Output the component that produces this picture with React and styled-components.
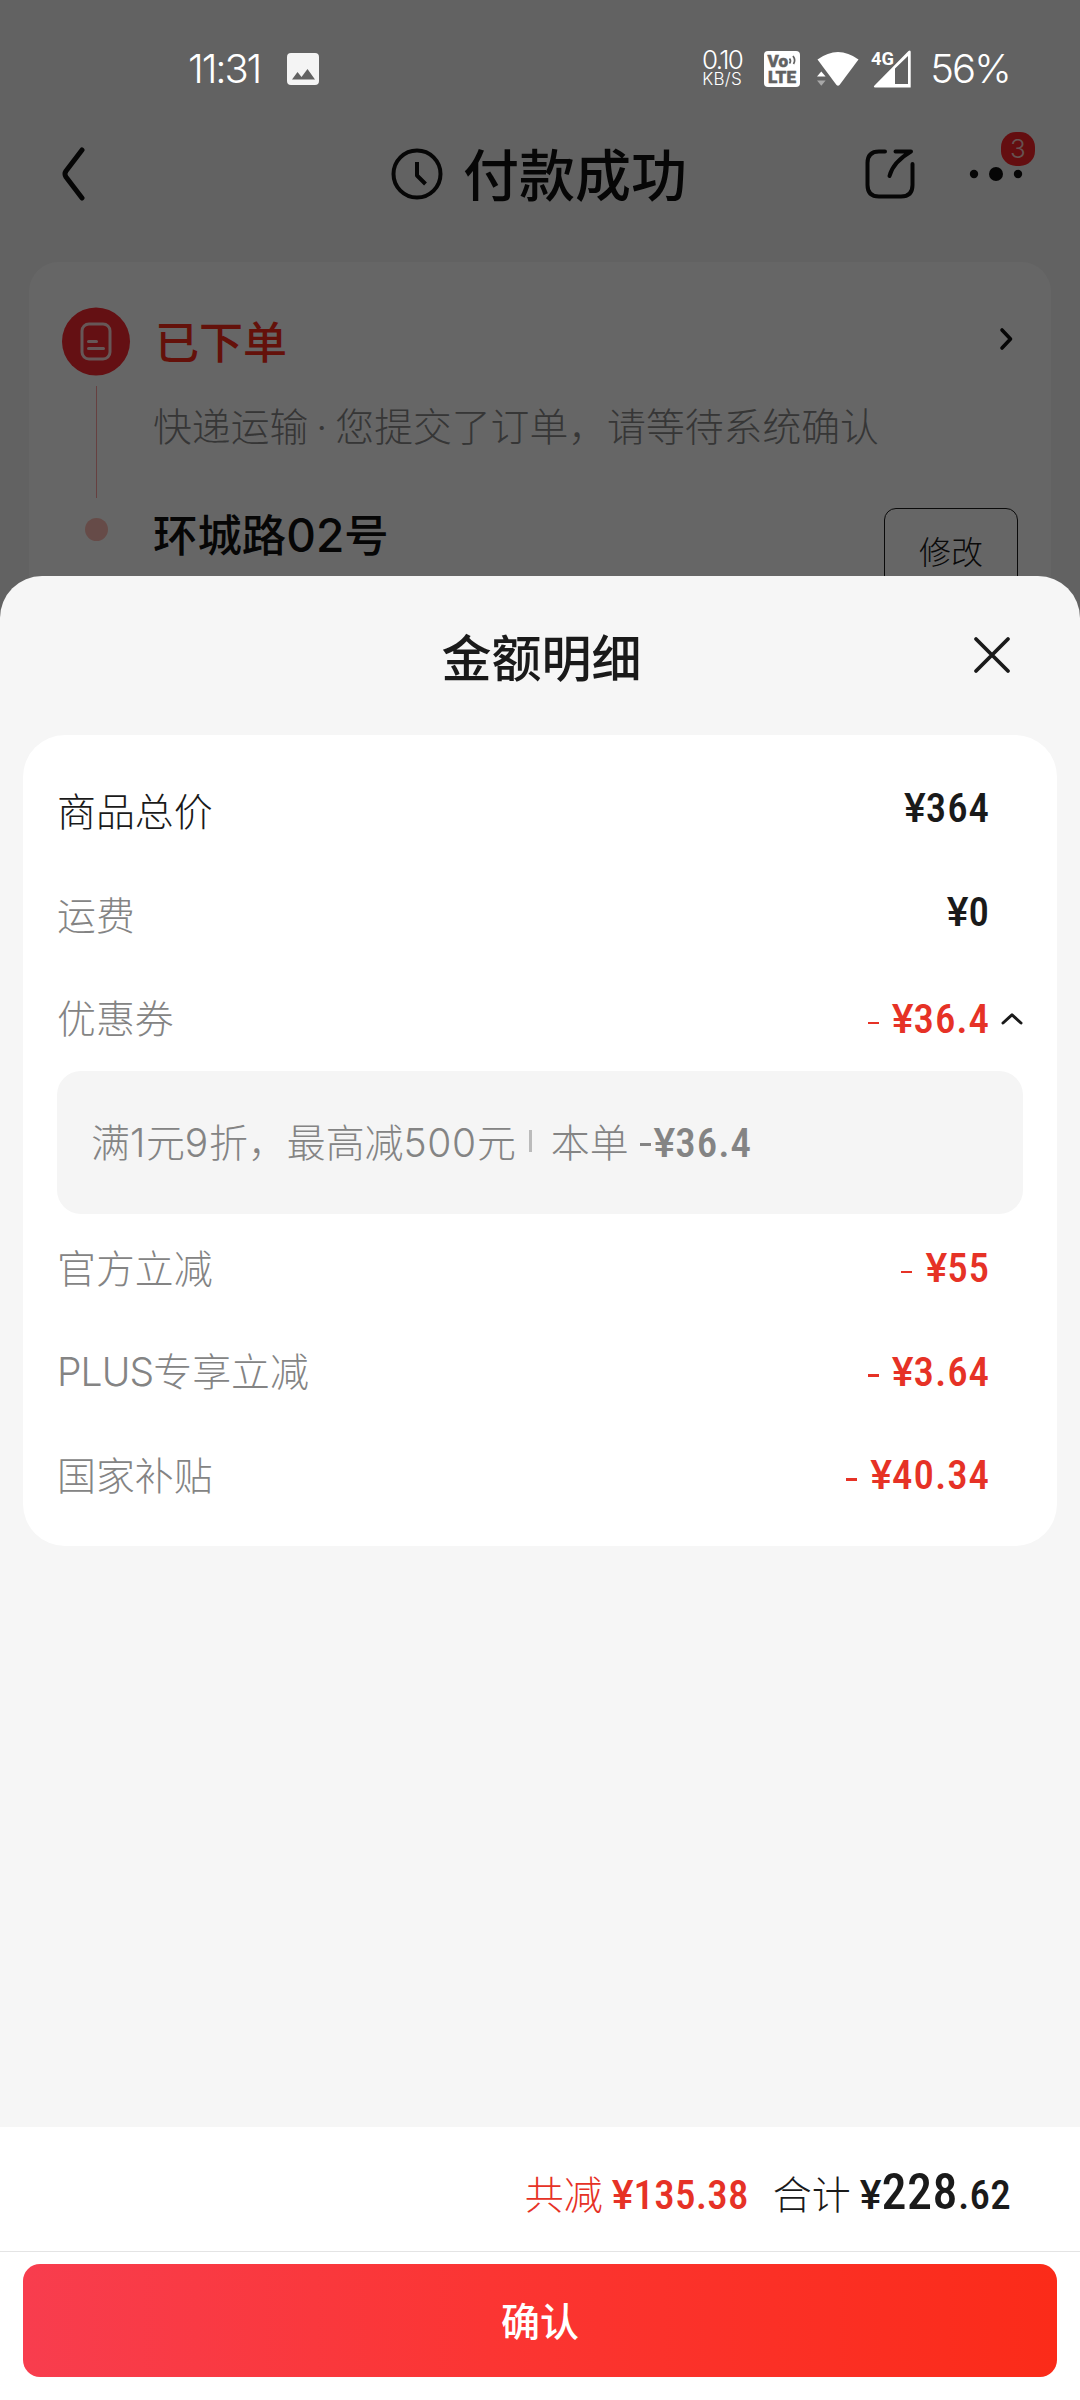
import React from "react";
import styled, { createGlobalStyle } from "styled-components";

const CJK = `"Noto Sans CJK SC", sans-serif`;
const LATIN = `Inter, "Noto Sans CJK SC", sans-serif`;
const NUM = `Roboto, "Noto Sans CJK SC", sans-serif`;

const Global = createGlobalStyle`
  *, *::before, *::after { box-sizing: border-box; }
  body { margin: 0; font-family: ${CJK}; color: #1a1a1a; }
`;

const Screen = styled.div`
  position: relative;
  width: 1080px;
  height: 2400px;
  overflow: hidden;
  background: #f6f6f6;
  display: flex;
  flex-direction: column;
`;

const StatusBar = styled.div`
  position: relative;
  z-index: 2;
  height: 118px;
  padding: 20px 70px 0 188px;
  display: flex;
  align-items: center;
  color: #fff;
  font-family: ${LATIN};
  font-weight: 300;
  svg { display: block; flex: none; overflow: visible; }
`;

const BigStatus = styled.span`
  font-size: 40px;
  line-height: 48px;
  letter-spacing: ${(p) => p.$track || "0"};
`;

const PhotoSlot = styled.span`
  margin-left: 27px;
`;

const Speed = styled.div`
  margin-left: auto;
  width: 42px;
  display: flex;
  flex-direction: column;
  align-items: center;
  font-size: 26px;
  line-height: 20px;
  letter-spacing: -1.6px;
  white-space: nowrap;
  small { margin-top: 1px; font-size: 17px; line-height: 17px; letter-spacing: 0.3px; font-weight: 300; }
`;

const StatusIcons = styled.div`
  display: flex;
  align-items: center;
  margin: 0 19px 0 21px;
`;

const IconSlot = styled.span`
  margin-left: ${(p) => p.$gap}px;
`;

const Page = styled.div`
  flex: 1;
  display: flex;
  flex-direction: column;
`;

const NavBar = styled.div`
  height: 144px;
  padding: 0 45px 32px 62px;
  display: grid;
  grid-template-columns: 150px 1fr 170px;
  align-items: center;
  svg { display: block; }
`;

const NavTitle = styled.div`
  display: flex;
  align-items: center;
  justify-content: center;
  gap: 20px;
  padding-left: 1px;
  font-size: 56px;
  font-weight: 500;
  color: #111;
  span { line-height: 60px; padding-bottom: 5px; }
`;

const NavActions = styled.div`
  display: flex;
  align-items: center;
  justify-content: space-between;
`;

const MoreWrap = styled.div`
  position: relative;
  width: 66px;
  height: 50px;
  display: flex;
  align-items: center;
`;

const Badge = styled.span`
  position: absolute;
  left: 32px;
  top: -17px;
  width: 34px;
  height: 34px;
  border-radius: 15px;
  background: #fa2428;
  color: #ffd0cc;
  display: flex;
  align-items: center;
  justify-content: center;
  font: 300 26px/36px ${LATIN};
`;

const OrderCard = styled.div`
  margin: 0 29px;
  height: 600px;
  border-radius: 30px;
  background: #fff;
  padding: 45px 33px 0;
  display: grid;
  grid-template-columns: 69px 1fr auto;
  column-gap: 22px;
  align-items: start;
`;

const Track = styled.div`
  display: flex;
  flex-direction: column;
  align-items: center;
  svg { display: block; }
`;

const TrackLine = styled.div`
  width: 1px;
  height: 112px;
  margin: 10px 1px 20px 0;
  background: #ffa0a0;
`;

const TrackDot = styled.div`
  width: 23px;
  height: 23px;
  margin-right: 1px;
  border-radius: 50%;
  background: #ffbcb3;
`;

const OrderText = styled.div`
  display: flex;
  flex-direction: column;
  white-space: nowrap;
  width: 700px;
`;

const OrderStatus = styled.div`
  margin-top: 1px;
  padding-left: 2px;
  font-size: 44px;
  line-height: 64px;
  font-weight: 500;
  color: #fa2c19;
`;

const OrderNote = styled.div`
  margin-top: 22px;
  font-size: 38.85px;
  line-height: 60px;
  font-weight: 300;
  color: #888;
  span { font-family: Inter; margin: 0 8px; }
`;

const OrderAddress = styled.div`
  margin-top: 44px;
  font-size: 44.4px;
  line-height: 64px;
  font-weight: 500;
  color: #111;
  span { font-family: Inter; font-size: 46px; font-weight: 450; }
`;

const OrderSide = styled.div`
  display: flex;
  flex-direction: column;
  align-items: flex-end;
  svg { display: block; margin: 20px 5px 0 0; }
`;

const EditButton = styled.div`
  margin-top: 157px;
  width: 134px;
  height: 88px;
  border: 1.5px solid #1a1a1a;
  border-radius: 12px;
  text-align: center;
  font-size: 32px;
  line-height: 83px;
  font-weight: 300;
`;

const Scrim = styled.div`
  position: absolute;
  inset: 0;
  z-index: 1;
  background: rgba(0, 0, 0, 0.6);
`;

const Sheet = styled.section`
  position: absolute;
  z-index: 3;
  left: 0;
  right: 0;
  top: 576px;
  bottom: 0;
  border-radius: 42px 42px 0 0;
  background: #f6f6f6;
  overflow: hidden;
  display: flex;
  flex-direction: column;
`;

const SheetHead = styled.header`
  height: 159px;
  padding: 0 68px 2px;
  display: grid;
  grid-template-columns: 40px 1fr 40px;
  align-items: center;
  justify-items: center;
  svg { display: block; }
`;

const SheetTitle = styled.h1`
  margin: 0;
  padding: 0 0 0 3px;
  font-size: 50px;
  line-height: 60px;
  font-weight: 500;
`;

const Detail = styled.div`
  margin: 0 23px;
  height: 811px;
  padding: 25px 34px 0;
  border-radius: 42px;
  background: #fff;
`;

const Row = styled.div`
  height: 103.6px;
  display: flex;
  align-items: center;
  justify-content: space-between;
`;

const Label = styled.span`
  padding-bottom: 5px;
  font-size: 38.9px;
  line-height: 60px;
  font-weight: 300;
  color: ${(p) => (p.$strong ? "#1a1a1a" : "#848484")};
  span { font: 300 39px Inter; letter-spacing: ${(p) => p.$track || "-0.9px"}; }
`;

const Amount = styled.span`
  display: flex;
  align-items: center;
  gap: 13px;
  padding-bottom: ${(p) => (p.$off ? 0 : 7)}px;
  color: ${(p) => (p.$off ? "#e63226" : "#1a1a1a")};
  svg { display: block; }
`;

const AmountSlot = styled.span`
  width: 33px;
  display: flex;
  justify-content: flex-end;
  margin-left: -13px;
`;

const Minus = styled.span`
  width: 11px;
  height: 2.5px;
  margin: ${(p) => p.$margin || "8px 0 0"};
  background: currentColor;
`;

const Figure = styled.span`
  font-family: ${NUM};
  font-size: ${(p) => p.$size || 41}px;
  line-height: 50px;
  font-weight: 550;
  font-stretch: 87%;
  letter-spacing: ${(p) => p.$track || "0.9px"};
`;

const Yen = styled.span`
  font-stretch: 100%;
  letter-spacing: 0;
`;

const Price = ({ children, $size, $track }) => (
  <Figure $track={$track}>
    <Yen>¥</Yen>
    {children}
  </Figure>
);

const Coupon = styled.div`
  height: 143.5px;
  margin-bottom: 2px;
  padding: 0 34px;
  border-radius: 24px;
  background: #f5f5f5;
  display: flex;
  align-items: center;
  color: #848484;
  white-space: nowrap;
`;

const Bar = styled.span`
  width: 3px;
  height: 22px;
  margin: 0 19px 4px 13px;
  background: #bbb;
`;

const Spacer = styled.div`
  flex: 1;
`;

const Summary = styled.div`
  height: 124px;
  padding: 0 69px 0 0;
  background: #fff;
  display: flex;
  align-items: baseline;
  justify-content: flex-end;
  font-size: 39px;
  line-height: 130px;
  font-weight: 300;
`;

const SumGroup = styled.div`
  display: flex;
  align-items: baseline;
  gap: 9px;
  margin-left: 24px;
  color: ${(p) => (p.$off ? "#e63226" : "#1a1a1a")};
`;

const Footer = styled.footer`
  height: 149px;
  padding: 11.5px 23px 0;
  border-top: 1px solid #e4e4e4;
  background: #fff;
`;

const Confirm = styled.button`
  display: block;
  width: 100%;
  height: 113px;
  padding: 0 0 3px;
  border: 0;
  border-radius: 17px;
  background: linear-gradient(90deg, #f83d4e, #fb3533 45%, #fb2b19);
  color: #fff;
  font: 500 39px/110px ${CJK};
`;

const rows1 = [
  { label: "商品总价", price: "364", strong: true },
  { label: "运费", price: "0" },
  { label: "优惠券", price: "36.4", off: true, open: true },
];
const rows2 = [
  { label: "官方立减", price: "55", off: true },
  { latin: "PLUS", label: "专享立减", price: "3.64", off: true },
  { label: "国家补贴", price: "40.34", off: true },
];

const PhotoIcon = () => (
  <svg width="32" height="32" viewBox="0 0 32 32">
    <path fill="#f4f4f4" fillRule="evenodd" d="M4 0h24a4 4 0 0 1 4 4v24a4 4 0 0 1-4 4H4a4 4 0 0 1-4-4V4a4 4 0 0 1 4-4zM5 26.500h23L20.500 16l-6 8-4-5z" />
  </svg>
);

const VolteIcon = () => (
  <svg width="36" height="36" viewBox="0 0 36 36">
    <rect width="36" height="36" rx="4" fill="#fff" />
    <g fill="#626262" stroke="#626262" strokeWidth="0.500" fontFamily="Roboto, sans-serif" fontWeight="900">
      <text x="3.500" y="16.300" fontSize="17" textLength="20.500" lengthAdjust="spacingAndGlyphs">Vo</text>
      <text x="4" y="31.500" fontSize="17" textLength="28" lengthAdjust="spacingAndGlyphs">LTE</text>
    </g>
    <path d="M25.500 7.500q2 2.500 0 5M29 5q3 4 0.500 8" fill="none" stroke="#626262" strokeWidth="1.700" />
  </svg>
);

const WifiIcon = () => (
  <svg width="42" height="36" viewBox="0 0 42 36">
    <path fill="#fff" d="M0.500 8.500Q21-6.500 41.500 8.500L22.500 34q-1.500 1.500-3 0z" />
    <path fill="#fff" d="M0 25.500 4.300 20.500 8.600 25.500z" />
    <path fill="#a8a8a8" d="M0 29.500h8.600L4.300 34.800z" />
  </svg>
);

const SignalIcon = () => (
  <svg width="40" height="38" viewBox="0 0 40 38">
    <path fill="#fff" fillRule="evenodd" d="M4 37.500q-2-.5-.5-2L37.500 1q2.200-1.500 2.200 1v35.500zM24 18.500v15.500h13V6z" />
    <text x="0" y="14.500" fill="#fff" fontFamily="Roboto, sans-serif" fontWeight="700" fontSize="19" textLength="23" lengthAdjust="spacingAndGlyphs">4G</text>
  </svg>
);

const stroke = { fill: "none", strokeLinecap: "round", strokeLinejoin: "round" };

const AmountRow = ({ label, latin, price, strong, off, open }) => (
  <Row>
    <Label $strong={strong}>{latin && <span>{latin}</span>}{label}</Label>
    <Amount $off={off}>
      {off && <Minus />}
      <Price>{price}</Price>
      <AmountSlot>
        {open && (
          <svg width="22" height="12" viewBox="0 0 22 12" {...stroke} stroke="#1a1a1a" strokeWidth="3">
            <path d="M2 10l9-8.200L20 10" />
          </svg>
        )}
      </AmountSlot>
    </Amount>
  </Row>
);

export default function App() {
  return (
    <Screen>
      <Global />
      <StatusBar>
        <BigStatus $track="-2.1px">11:31</BigStatus>
        <PhotoSlot><PhotoIcon /></PhotoSlot>
        <Speed>0.10<small>KB/S</small></Speed>
        <StatusIcons>
          <VolteIcon />
          <IconSlot $gap={17}><WifiIcon /></IconSlot>
          <IconSlot $gap={12}><SignalIcon /></IconSlot>
        </StatusIcons>
        <BigStatus $track="-1.8px">56%</BigStatus>
      </StatusBar>
      <Page>
        <NavBar>
          <svg width="24" height="54" viewBox="0 0 24 54" {...stroke} stroke="#111" strokeWidth="5">
            <path d="M20 3 4 24q-2 3 0 6L20 51" />
          </svg>
          <NavTitle>
            <svg width="52" height="52" viewBox="0 0 52 52" {...stroke} stroke="#111" strokeWidth="4">
              <circle cx="26" cy="26" r="23.500" />
              <path d="M26 14v13.500l8.500 8.500" strokeLinecap="butt" />
            </svg>
            <span>付款成功</span>
          </NavTitle>
          <NavActions>
            <svg width="50" height="50" viewBox="0 0 50 50" {...stroke} stroke="#111" strokeWidth="4">
              <path d="M20 2.500H14Q2.500 2.500 2.500 14V36Q2.500 47.500 14 47.500H36Q47.500 47.500 47.500 36V15" />
              <path d="M30.500 2.500H46Q28 13 24.500 27" />
            </svg>
            <MoreWrap>
              <svg width="54" height="16" viewBox="0 0 54 16" fill="#111">
                <circle cx="5" cy="8" r="4.200" />
                <circle cx="27" cy="8" r="7" />
                <circle cx="49" cy="8" r="4.200" />
              </svg>
              <Badge>3</Badge>
            </MoreWrap>
          </NavActions>
        </NavBar>
        <OrderCard>
          <Track>
            <svg width="69" height="69" viewBox="0 0 69 69">
              <circle cx="34" cy="34.500" r="34" fill="#fa2830" />
              <g {...stroke} stroke="#ffd9d9" strokeWidth="3">
                <rect x="20" y="17" width="28" height="35" rx="7" />
                <path d="M26.500 34.500h8M26.500 41.500h15" />
              </g>
            </svg>
            <TrackLine />
            <TrackDot />
          </Track>
          <OrderText>
            <OrderStatus>已下单</OrderStatus>
            <OrderNote>快递运输<span>·</span>您提交了订单，请等待系统确认</OrderNote>
            <OrderAddress>环城路<span>02</span>号</OrderAddress>
          </OrderText>
          <OrderSide>
            <svg width="14" height="24" viewBox="0 0 14 24" {...stroke} stroke="#111" strokeWidth="3.600">
              <path d="M3 3l8.500 9L3 21" />
            </svg>
            <EditButton>修改</EditButton>
          </OrderSide>
        </OrderCard>
      </Page>
      <Scrim />
      <Sheet>
        <SheetHead>
          <span />
          <SheetTitle>金额明细</SheetTitle>
          <svg width="40" height="40" viewBox="0 0 40 40" {...stroke} stroke="#1a1a1a" strokeWidth="3.800">
            <path d="M4 4l32 32M36 4 4 36" />
          </svg>
        </SheetHead>
        <Detail>
          {rows1.map((r) => <AmountRow key={r.label} {...r} />)}
          <Coupon>
            <Label $track="0.7px">满<span>1</span>元<span>9</span>折，最高减<span>500</span>元</Label>
            <Bar />
            <Label>本单</Label>
            <Minus $margin="4px 3px 0 11px" />
            <Price>36.4</Price>
          </Coupon>
          {rows2.map((r) => <AmountRow key={r.label} {...r} />)}
        </Detail>
        <Spacer />
        <Summary>
          <SumGroup $off>共减<Price $track="0.2px">135.38</Price></SumGroup>
          <SumGroup>
            合计
            <span>
              <Price $track="0.2px" />
              <Figure $size={50} $track="0.5px">228</Figure>
              <Figure $track="0.2px">.62</Figure>
            </span>
          </SumGroup>
        </Summary>
        <Footer><Confirm>确认</Confirm></Footer>
      </Sheet>
    </Screen>
  );
}
